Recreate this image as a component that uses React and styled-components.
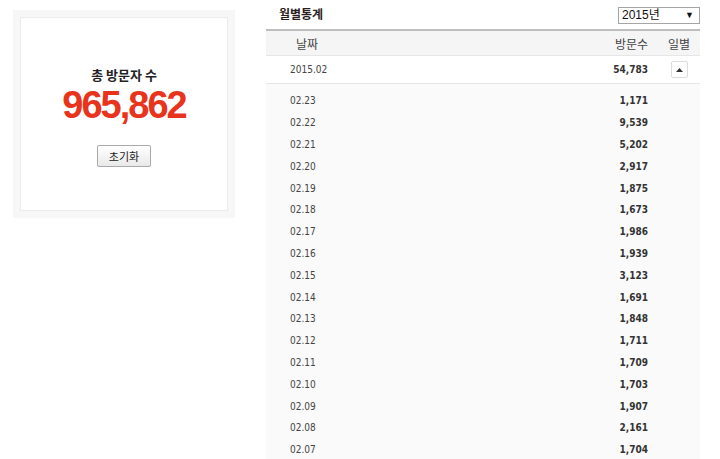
import styled, { createGlobalStyle } from 'styled-components'

const Global = createGlobalStyle`
body {
  margin: 0;
  background: #ffffff;
  font-family: "Noto Sans CJK KR", "Liberation Sans", sans-serif;
  color: #333;
}
`

const Page = styled.div`
display: flex;
align-items: flex-start;
padding-left: 13px;
gap: 31px;
`

const CounterBox = styled.div`
margin-top: 10px;
width: 222px;
height: 208px;
box-sizing: border-box;
padding: 7px;
background: #f7f7f7;
`

const CounterInner = styled.div`
height: 100%;
box-sizing: border-box;
background: #fff;
border: 1px solid #ececec;
display: flex;
flex-direction: column;
align-items: center;
padding-top: 48px;
`

const CounterLabel = styled.div`
font-size: 13px;
font-weight: 700;
line-height: 18px;
color: #222;
`

const CounterValue = styled.div`
font-family: "Liberation Sans", Arial, sans-serif;
font-size: 38px;
font-weight: 700;
letter-spacing: -2px;
line-height: 38px;
margin-top: 2px;
color: #e8341c;
`

const ResetButton = styled.button`
margin-top: 21px;
width: 54px;
height: 22px;
padding: 0;
font-family: "Noto Sans CJK KR", sans-serif;
font-size: 11px;
color: #222;
background: linear-gradient(#ffffff, #e9e9e9);
border: 1px solid #a9a9a9;
border-radius: 2px;
`

const Stats = styled.div`
width: 434px;
`

const StatsHead = styled.div`
height: 29px;
display: flex;
align-items: center;
justify-content: space-between;
padding-left: 13px;
`

const StatsTitle = styled.div`
font-size: 12px;
font-weight: 700;
color: #2b1f22;
line-height: 14px;
margin-top: -2px;
`

const YearSelect = styled.div`
width: 82px;
height: 17px;
box-sizing: border-box;
border: 1px solid #a5a5a5;
display: flex;
align-items: center;
justify-content: space-between;
padding: 0 5px 0 3px;
font-family: "Liberation Sans", "Noto Sans CJK KR", sans-serif;
font-size: 12px;
line-height: 15px;
color: #111;
margin-top: 1px;
`

const Arrow = styled.span`
font-size: 9px;
color: #111;
`

const Row = styled.div`
display: grid;
grid-template-columns: 1fr 100px 52px;
align-items: center;
height: ${p => p.$h}px;
background: ${p => p.$bg || 'transparent'};
border-bottom: ${p => (p.$line ? '1px solid #e6e6e6' : 'none')};
`

const HeadRow = styled(Row)`
border-top: 2px solid #bdbdbd;
font-size: 12px;
color: #444;
`

const Cell = styled.div`
text-align: ${p => p.$align || 'left'};
padding-left: ${p => p.$pl || 0}px;
padding-right: ${p => p.$pr || 0}px;
`

const ToggleCell = styled.div`
display: flex;
justify-content: center;
padding-left: 10px;
`

const DateText = styled(Cell)`
font-family: "DejaVu Sans Condensed", "Liberation Sans", sans-serif;
font-size: 10px;
color: #444;
`

const CountText = styled(Cell)`
font-family: "DejaVu Sans Condensed", "Liberation Sans", sans-serif;
font-size: 10px;
font-weight: 700;
color: #333;
`

const ToggleButton = styled.div`
width: 17px;
height: 17px;
box-sizing: border-box;
border: 1px solid #dcdcdc;
border-radius: 2px;
background: #fff;
display: flex;
align-items: center;
justify-content: center;
`

const Daily = styled.div`
background: #fafafa;
padding-top: 6px;
`

const days = [
  ['02.23', '1,171'], ['02.22', '9,539'], ['02.21', '5,202'], ['02.20', '2,917'],
  ['02.19', '1,875'], ['02.18', '1,673'], ['02.17', '1,986'], ['02.16', '1,939'],
  ['02.15', '3,123'], ['02.14', '1,691'], ['02.13', '1,848'], ['02.12', '1,711'],
  ['02.11', '1,709'], ['02.10', '1,703'], ['02.09', '1,907'], ['02.08', '2,161'],
  ['02.07', '1,704'],
]

export default function App() {
  return (
    <Page>
      <Global />
      <CounterBox>
        <CounterInner>
          <CounterLabel>총 방문자 수</CounterLabel>
          <CounterValue>965,862</CounterValue>
          <ResetButton>초기화</ResetButton>
        </CounterInner>
      </CounterBox>
      <Stats>
        <StatsHead>
          <StatsTitle>월별통계</StatsTitle>
          <YearSelect>2015년<Arrow>▼</Arrow></YearSelect>
        </StatsHead>
        <HeadRow $h={24} $bg="#f5f5f5" $line>
          <Cell $pl={30}>날짜</Cell>
          <Cell $align="right">방문수</Cell>
          <ToggleCell>일별</ToggleCell>
        </HeadRow>
        <Row $h={27} $bg="#fff" $line>
          <DateText $pl={24}>2015.02</DateText>
          <CountText $align="right">54,783</CountText>
          <ToggleCell>
            <ToggleButton>
              <svg width="7" height="4" viewBox="0 0 7 4"><path d="M0 4 L3.5 0 L7 4 Z" fill="#333" /></svg>
            </ToggleButton>
          </ToggleCell>
        </Row>
        <Daily>
          {days.map(([d, n]) => (
            <Row key={d} $h={21.8}>
              <DateText $pl={24}>{d}</DateText>
              <CountText $align="right">{n}</CountText>
              <Cell />
            </Row>
          ))}
        </Daily>
      </Stats>
    </Page>
  )
}
